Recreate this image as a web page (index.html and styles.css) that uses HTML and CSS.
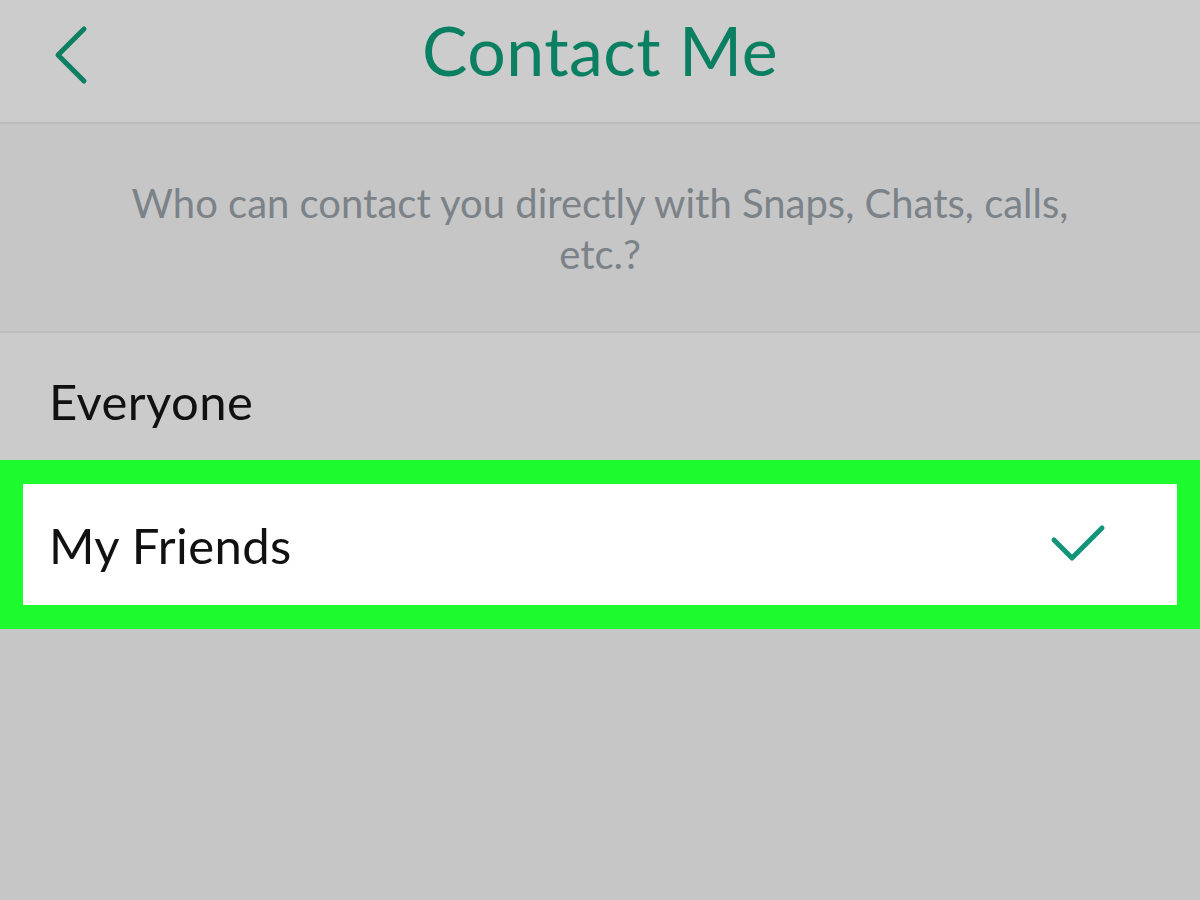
FILE: index.html
```html
<!DOCTYPE html>
<html>
<head>
<meta charset="utf-8">
<link rel="stylesheet" href="styles.css">
</head>
<body>
<div class="screen">
  <header class="header">
    <svg class="back" width="40" height="64" viewBox="0 0 40 64">
      <polyline points="31,8 5,34 31,60" fill="none" stroke="#0b7f62" stroke-width="5" stroke-linecap="round" stroke-linejoin="round"/>
    </svg>
    <h1 class="title">Contact Me</h1>
  </header>
  <section class="desc">
    <p class="desc-text">Who can contact you directly with Snaps, Chats, calls, etc.?</p>
  </section>
  <div class="option plain">Everyone</div>
  <div class="highlight">
    <div class="option selected">
      <span>My Friends</span>
      <svg class="check" width="60" height="44" viewBox="0 0 60 44">
        <polyline points="7,17 25,35 55,5" fill="none" stroke="#11957a" stroke-width="5" stroke-linecap="round" stroke-linejoin="round"/>
      </svg>
    </div>
  </div>
  <div class="rest"></div>
</div>
</body>
</html>
```

FILE: styles.css
```css
html, body {
  margin: 0;
  padding: 0;
}
body {
  width: 1200px;
  height: 900px;
  overflow: hidden;
  background: #c6c6c6;
  font-family: Lato, "Noto Sans", sans-serif;
}
.screen {
  display: flex;
  flex-direction: column;
  height: 900px;
}
.header {
  height: 122px;
  background: #cccccc;
  border-bottom: 2px solid #bcbcbc;
  display: flex;
  align-items: center;
  justify-content: center;
  position: relative;
}
.back {
  position: absolute;
  left: 53px;
  top: 21px;
}
.title {
  margin: 0 0 24px;
  font-weight: 400;
  font-size: 68px;
  color: #0b7f62;
  letter-spacing: 0.5px;
}
.desc {
  height: 209px;
  background: #c6c6c6;
  border-bottom: 2px solid #bdbdbd;
  display: flex;
  justify-content: center;
  box-sizing: border-box;
}
.desc-text {
  margin: 54px 0 0;
  width: 1000px;
  text-align: center;
  font-size: 40px;
  line-height: 51px;
  color: #7b8288;
}
.option {
  height: 127px;
  background: #cbcbcb;
  display: flex;
  align-items: center;
  padding-left: 50px;
  font-size: 49px;
  letter-spacing: 0.4px;
  color: #111111;
  box-sizing: border-box;
}
.option.plain {
  padding-top: 8px;
  padding-left: 49px;
}
.highlight {
  background: #1dfa2d;
  padding: 24px 23px 24px 23px;
}
.option.selected {
  height: 121px;
  background: #ffffff;
  padding-left: 26px;
  justify-content: space-between;
  padding-right: 70px;
}
.rest {
  flex: 1;
  background: #c6c6c6;
}
```
